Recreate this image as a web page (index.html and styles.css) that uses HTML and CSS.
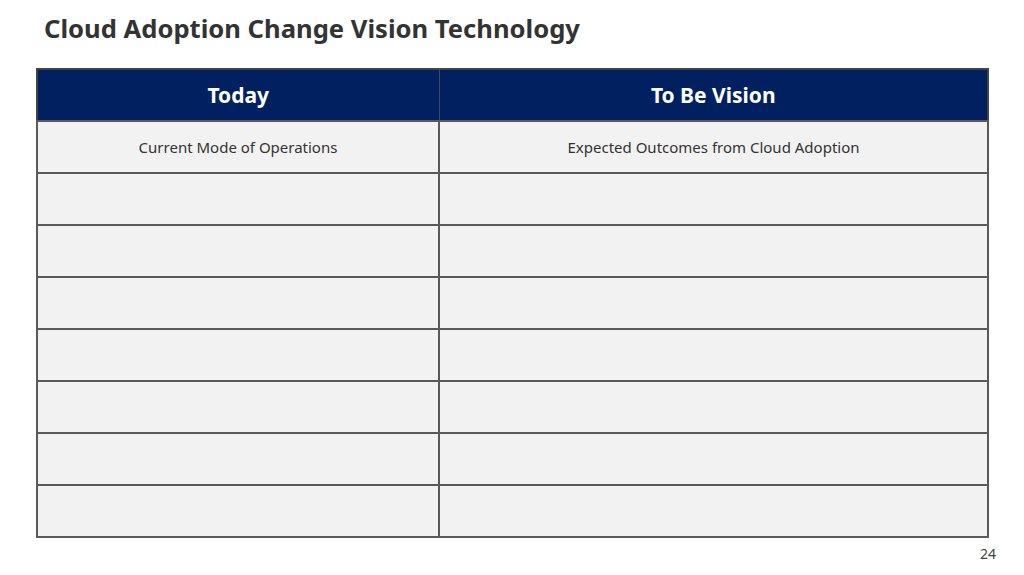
FILE: index.html
```html
<!DOCTYPE html>
<html lang="en">
<head>
    <meta charset="UTF-8">
    <meta name="viewport" content="width=device-width, initial-scale=1.0">
    <title>Cloud Adoption Change Vision Technology</title>
    <link rel="stylesheet" href="styles.css">
</head>
<body>
    <div class="slide">
        <h1 class="slide-title">Cloud Adoption Change Vision Technology</h1>
        <table class="vision-table">
            <thead>
                <tr>
                    <th class="col-today">Today</th>
                    <th class="col-vision">To Be Vision</th>
                </tr>
            </thead>
            <tbody>
                <tr>
                    <td>Current Mode of Operations</td>
                    <td>Expected Outcomes from Cloud Adoption</td>
                </tr>
                <tr><td></td><td></td></tr>
                <tr><td></td><td></td></tr>
                <tr><td></td><td></td></tr>
                <tr><td></td><td></td></tr>
                <tr><td></td><td></td></tr>
                <tr><td></td><td></td></tr>
                <tr><td></td><td></td></tr>
            </tbody>
        </table>
        <div class="page-number">24</div>
    </div>
</body>
</html>
```
FILE: styles.css
```css
body {
    margin: 0;
    font-family: "Noto Sans", "Open Sans", Arial, sans-serif;
    background-color: #fff;
    color: #333;
}

.slide {
    width: 1024px;
    height: 575px;
    padding: 12px 35px 0 36px;
    box-sizing: border-box;
}

.slide-title {
    margin: 0 0 0 8px;
    font-size: 25.6px;
    font-weight: 700;
    line-height: 34px;
    color: #333;
}

.vision-table {
    width: 953px;
    margin-top: 22px;
    border-collapse: collapse;
    table-layout: fixed;
    border: 2px solid #444;
}

.vision-table th {
    height: 52px;
    padding: 0;
    background-color: #00205f;
    color: #fff;
    font-size: 21px;
    font-weight: 700;
    border-right: 1px solid #3a4a6e;
    box-sizing: border-box;
}

.vision-table .col-today {
    width: 402px;
}

.vision-table td {
    height: 52px;
    padding: 0;
    background-color: #f2f2f2;
    border: 2px solid #5a5a5a;
    text-align: center;
    font-size: 15px;
    color: #333;
    box-sizing: border-box;
}

.page-number {
    margin-top: 6px;
    margin-right: -7px;
    text-align: right;
    font-size: 14px;
    color: #444;
}
```
